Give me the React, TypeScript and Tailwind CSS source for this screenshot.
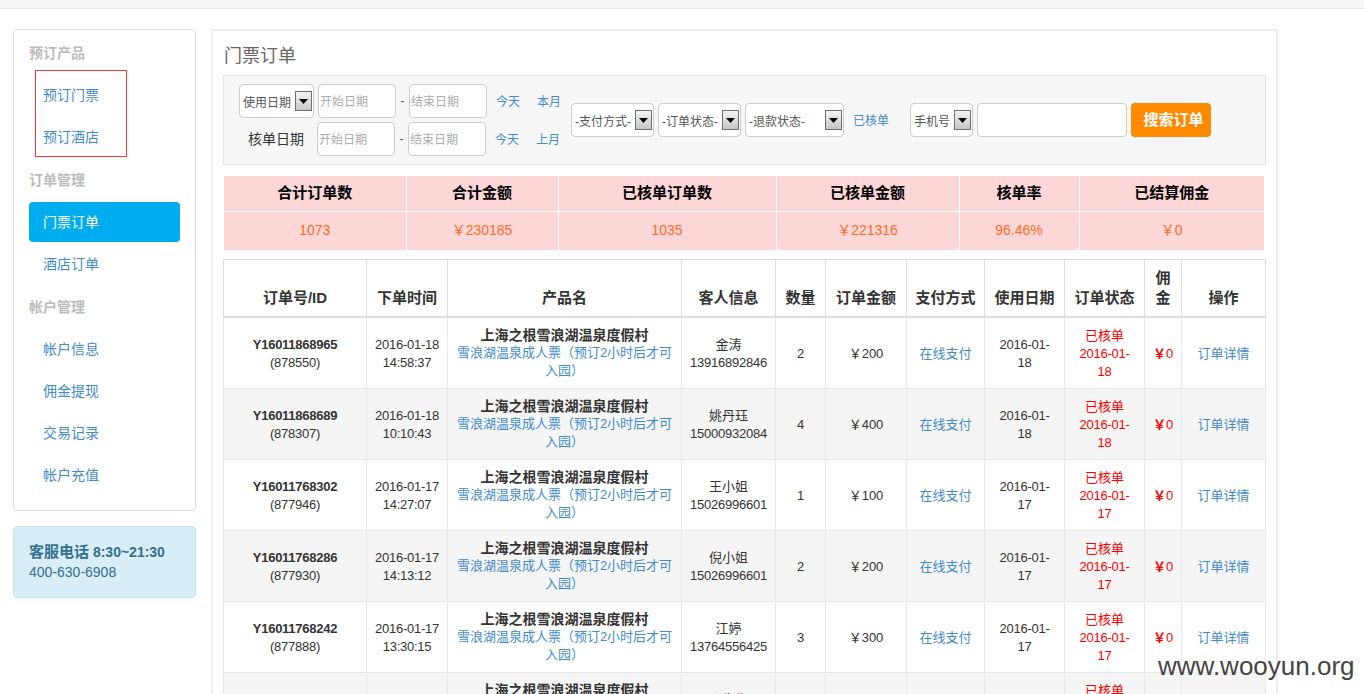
const font = "font-['Liberation_Sans','Noto_Sans_CJK_SC',sans-serif]"

const orders = [
  { no: "Y16011868965", id: "878550", day: "2016-01-18", time: "14:58:37", name: "金涛", phone: "13916892846", qty: 2, amount: 200, use: "18" },
  { no: "Y16011868689", id: "878307", day: "2016-01-18", time: "10:10:43", name: "姚丹珏", phone: "15000932084", qty: 4, amount: 400, use: "18" },
  { no: "Y16011768302", id: "877946", day: "2016-01-17", time: "14:27:07", name: "王小姐", phone: "15026996601", qty: 1, amount: 100, use: "17" },
  { no: "Y16011768286", id: "877930", day: "2016-01-17", time: "14:13:12", name: "倪小姐", phone: "15026996601", qty: 2, amount: 200, use: "17" },
  { no: "Y16011768242", id: "877888", day: "2016-01-17", time: "13:30:15", name: "江婷", phone: "13764556425", qty: 3, amount: 300, use: "17" },
  { no: "Y16011768201", id: "877850", day: "2016-01-17", time: "12:41:26", name: "张先生", phone: "13816520437", qty: 2, amount: 200, use: "17" },
]

const headers = ["订单号/ID", "下单时间", "产品名", "客人信息", "数量", "订单金额", "支付方式", "使用日期", "订单状态", "佣金", "操作"]
const colWidths = [143, 81, 234, 94, 50, 81, 78, 80, 80, 37, 84]

const stats = [
  { label: "合计订单数", value: "1073", width: 182 },
  { label: "合计金额", value: "￥230185", width: 152 },
  { label: "已核单订单数", value: "1035", width: 218 },
  { label: "已核单金额", value: "￥221316", width: 183 },
  { label: "核单率", value: "96.46%", width: 120 },
  { label: "已结算佣金", value: "￥0", width: 185 },
]

function NavHeading({ children }: { children: string }) {
  return <p className="h-5 mb-3 text-sm leading-5 font-bold text-[#bbbbbb]">{children}</p>
}

function NavItem({ children, active }: { children: string; active?: boolean }) {
  return (
    <a className={active
      ? "block h-10 px-[14px] rounded bg-[#00aeef] text-sm leading-10 text-white"
      : "block h-10 px-[14px] text-sm leading-10 text-[#428bca]"}>
      {children}
    </a>
  )
}

function SelectBox({ label, width }: { label: string; width: string }) {
  return (
    <div className={`${width} h-[34px] shrink-0 flex items-center justify-between pl-[3px] pr-[1px] bg-white border border-[#cccccc] rounded text-xs text-[#555555]`}>
      <span className="pt-[3px] whitespace-nowrap">{label}</span>
      <span className="w-[17px] h-[20px] flex items-center justify-center border border-[#707070] bg-linear-to-b from-[#f4f4f4] to-[#c6c6c6]">
        <svg width="9" height="5" viewBox="0 0 9 5"><path d="M0 0h9L4.500 5z" fill="#000" /></svg>
      </span>
    </div>
  )
}

function DateInput({ placeholder }: { placeholder: string }) {
  return (
    <input
      placeholder={placeholder}
      className="w-[78px] h-[34px] px-px pt-[2px] bg-white border border-[#cccccc] rounded text-xs text-[#555555] placeholder:text-[#aaaaaa]"
    />
  )
}

function DateRange({ shortcut }: { shortcut: string }) {
  return (
    <>
      <DateInput placeholder="开始日期" />
      <span className="w-[13px] text-center text-xs text-[#555555]">-</span>
      <DateInput placeholder="结束日期" />
      <a className="ml-[9px] pt-[2px] text-xs text-[#428bca]">今天</a>
      <a className="ml-[17px] pt-[2px] text-xs text-[#428bca]">{shortcut}</a>
    </>
  )
}

function Sidebar() {
  return (
    <aside className="w-[183px] shrink-0">
      <div className="h-[482px] px-[15px] pt-[13px] bg-white border border-[#dddddd] rounded">
        <NavHeading>预订产品</NavHeading>
        <div className="flex flex-col gap-[2px] mb-[13px]">
          <NavItem>预订门票</NavItem>
          <NavItem>预订酒店</NavItem>
        </div>
        <NavHeading>订单管理</NavHeading>
        <div className="flex flex-col gap-[2px] mb-[13px]">
          <NavItem active>门票订单</NavItem>
          <NavItem>酒店订单</NavItem>
        </div>
        <NavHeading>帐户管理</NavHeading>
        <div className="flex flex-col gap-[2px]">
          <NavItem>帐户信息</NavItem>
          <NavItem>佣金提现</NavItem>
          <NavItem>交易记录</NavItem>
          <NavItem>帐户充值</NavItem>
        </div>
      </div>
      <div className="mt-[15px] h-[72px] p-[15px] bg-[#d9edf7] border border-[#bce8f1] rounded text-sm leading-5 text-[#31708f]">
        <p className="font-bold whitespace-nowrap"><span className="text-[15px]">客服电话</span> 8:30~21:30</p>
        <p>400-630-6908</p>
      </div>
    </aside>
  )
}

function Filters() {
  return (
    <div className="w-[1043px] h-[90px] flex items-center pl-[15px] bg-[#f7f7f7] border border-[#e3e3e3]">
      <div className="w-[322px] shrink-0 flex flex-col gap-1">
        <div className="flex items-center">
          <SelectBox label="使用日期" width="w-[75px]" />
          <span className="w-[4px]" />
          <DateRange shortcut="本月" />
        </div>
        <div className="flex items-center">
          <span className="w-[78px] pl-[9px] text-sm text-[#333333]">核单日期</span>
          <DateRange shortcut="上月" />
        </div>
      </div>
      <div className="ml-[10px] flex items-center gap-1">
        <SelectBox label="-支付方式-" width="w-[83px]" />
        <SelectBox label="-订单状态-" width="w-[83px]" />
        <SelectBox label="-退款状态-" width="w-[99px]" />
        <a className="ml-[5px] pt-[2px] w-[36px] text-xs text-[#428bca] whitespace-nowrap">已核单</a>
        <span className="w-[13px]" />
        <SelectBox label="手机号" width="w-[63px]" />
        <input className="w-[150px] h-[34px] bg-white border border-[#cccccc] rounded" />
        <button className="w-[80px] h-[34px] pl-[5px] bg-[#ff8a00] rounded text-[15px] font-bold text-white">搜索订单</button>
      </div>
    </div>
  )
}

function Stats() {
  return (
    <table className="ml-px mt-[11px] w-[1040px] table-fixed border-collapse bg-[#fdd7d8]">
      <colgroup>
        {stats.map((s) => <col key={s.label} style={{ width: s.width }} />)}
      </colgroup>
      <tbody>
        <tr>
          {stats.map((s) => (
            <th key={s.label} className="h-[35px] border-b border-l first:border-l-0 border-white text-[15px] font-bold text-black">{s.label}</th>
          ))}
        </tr>
        <tr>
          {stats.map((s) => (
            <td key={s.label} className="h-[39px] pb-[2px] border-l first:border-l-0 border-white text-center text-sm text-[#ff6a22]">{s.value}</td>
          ))}
        </tr>
      </tbody>
    </table>
  )
}

function Orders() {
  const cell = "px-2 pt-[9px] pb-[7px] border border-[#e8e8e8] text-center align-middle"
  const narrow = "block tracking-[-0.25px]"
  return (
    <table className="mt-[9px] w-[1042px] table-fixed border-collapse text-[13px] leading-[18px] text-[#333333]">
      <colgroup>
        {colWidths.map((w, i) => <col key={i} style={{ width: w }} />)}
      </colgroup>
      <thead>
        <tr>
          {headers.map((h) => (
            <th key={h} className="px-2 py-2 border border-[#dddddd] border-b-2 text-center align-bottom text-[15px] leading-5 font-bold">{h}</th>
          ))}
        </tr>
      </thead>
      <tbody>
        {orders.map((o, i) => (
          <tr key={o.no} className={i % 2 === 1 ? "bg-[#f5f5f5]" : "bg-white"}>
            <td className={cell}>
              <b className={narrow}>{o.no}</b>
              <span className={narrow}>({o.id})</span>
            </td>
            <td className={`${cell} whitespace-nowrap`}>
              <span className={narrow}>{o.day}</span>
              <span className={narrow}>{o.time}</span>
            </td>
            <td className="px-2 py-2 border border-[#e8e8e8] text-center align-middle">
              <b className="block text-[14px] leading-[18px]">上海之根雪浪湖温泉度假村</b>
              <a className="text-[#428bca]">雪浪湖温泉成人票（预订2小时后才可入园）</a>
            </td>
            <td className={cell}>
              <span className="block">{o.name}</span>
              <span className={narrow}>{o.phone}</span>
            </td>
            <td className={cell}>{o.qty}</td>
            <td className={cell}>￥{o.amount}</td>
            <td className={cell}><a className="text-[#428bca]">在线支付</a></td>
            <td className={cell}>
              <span className={narrow}>2016-01-</span>
              <span className={narrow}>{o.use}</span>
            </td>
            <td className={`${cell} text-[#ff0000]`}>
              <span className="block">已核单</span>
              <span className={narrow}>2016-01-</span>
              <span className={narrow}>{o.use}</span>
            </td>
            <td className={`${cell} !px-0 pr-[2px] text-[#ff0000]`}><b>￥</b>0</td>
            <td className={cell}><a className="text-[#428bca]">订单详情</a></td>
          </tr>
        ))}
      </tbody>
    </table>
  )
}

export default function App() {
  return (
    <div className={`${font} relative h-[694px] overflow-hidden bg-white`}>
      <div className="h-[9px] bg-[#f8f8f8] border-b border-[#e7e7e7]" />
      <div className="flex pt-5 pl-[13px]">
        <Sidebar />
        <main className="ml-[15px] w-[1067px] h-[800px] shrink-0 pl-[10px] pt-[11px] border-2 border-[#eeeeee]">
          <h1 className="h-[26px] mb-[7px] pl-px pt-px text-lg leading-[26px] font-normal text-[#666666]">门票订单</h1>
          <Filters />
          <Stats />
          <Orders />
        </main>
      </div>
      <div className="absolute left-[35px] top-[70px] w-[92px] h-[87px] border border-[#ff3333]" />
      <div className="absolute left-[1158px] top-[650px] text-[26px] leading-[32px] text-[#444444] whitespace-nowrap">www.wooyun.org</div>
    </div>
  )
}
